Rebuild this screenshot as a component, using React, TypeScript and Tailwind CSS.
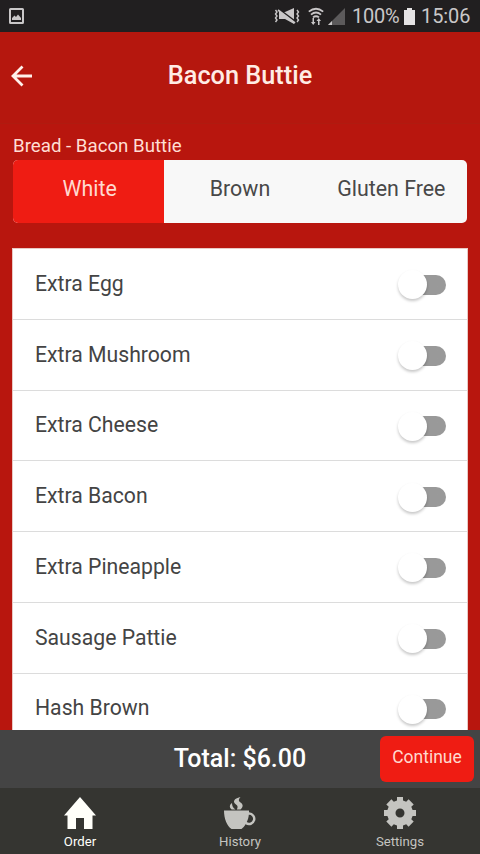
import React, { useState } from "react";

const breads = ["White", "Brown", "Gluten Free"];

const extras = [
  "Extra Egg",
  "Extra Mushroom",
  "Extra Cheese",
  "Extra Bacon",
  "Extra Pineapple",
  "Sausage Pattie",
  "Hash Brown",
];

function StatusBar() {
  return (
    <div className="flex h-8 shrink-0 items-center justify-between bg-[#211f20] pl-[9px] pr-[10px] text-[#c9c7c8]">
      <svg className="h-4 w-[15px]" viewBox="0 0 15 16" fill="none">
        <rect x="1" y="1" width="13" height="14" rx="0.5" stroke="currentColor" strokeWidth="2" />
        <path d="M3 12V10l2.500-2.500L7 9l2-2.500 3 3.500v2z" fill="currentColor" />
      </svg>
      <div className="flex items-center">
        {/* Muted / vibrate */}
        <svg className="mr-[8px] h-[18px] w-[26px]" viewBox="0 0 26 18" fill="none" stroke="currentColor" strokeWidth="1.4">
          <path d="M1.500 3L3 5 1.500 7 3 9l-1.500 2L3 13l-1.500 2M23 3l1.500 2L23 7l1.500 2-1.500 2 1.500 2-1.500 2" />
          <path d="M5 5h6l9-4v16l-9-5H5z" fill="currentColor" stroke="none" />
          <path d="M4 1.500L22 15" stroke="#211f20" strokeWidth="1.600" />
          <path d="M4 3L21 16" strokeWidth="1.600" />
        </svg>
        {/* Wifi with traffic arrows */}
        <svg className="mr-[4px] h-[18px] w-[16px]" viewBox="0 0 16 18" fill="none" stroke="currentColor" strokeWidth="1.8">
          <path d="M.8 4.600Q8-1.200 15.200 4.600M3 7.600Q8 3.400 13 7.600M5 10.400Q8 8 11 10.400" />
          <path d="M6 11v4H7.500L5.200 18 3 15h1.500v-4zM10 18v-4H8.500l2.300-3L13 14h-1.500v4z" fill="currentColor" stroke="none" />
        </svg>
        {/* Signal */}
        <svg className="mr-[7px] h-[17px] w-[17px]" viewBox="0 0 17 17">
          <path d="M0 17L17 0v17z" fill="#5c5a5b" />
          <path d="M0 17l4-4v4z" fill="currentColor" />
        </svg>
        <span className="w-[48px] whitespace-nowrap text-[20px] leading-8 tracking-[-0.2px]">100%</span>
        <svg className="ml-[4px] mr-[6px] h-[17px] w-[11px]" viewBox="0 0 11 17" fill="#e5e3e4">
          <path d="M3 0h5v2h3v15H0V2h3z" />
        </svg>
        <span className="w-[49px] whitespace-nowrap text-[20px] leading-8 tracking-[-0.1px]">15:06</span>
      </div>
    </div>
  );
}

function Toggle({ on, onClick }: { on: boolean; onClick: () => void }) {
  return (
    <button role="switch" aria-checked={on} onClick={onClick} className="mt-[2px] flex h-[29px] w-[48px] items-center">
      <span className="flex h-5 w-full items-center rounded-full bg-gradient-to-r from-transparent from-30% to-[#999] to-30%">
        <span className={`h-[29px] w-[29px] shrink-0 rounded-full bg-white shadow-[0_2px_3px_rgba(0,0,0,0.22)] ${on ? "ml-auto" : ""}`} />
      </span>
    </button>
  );
}

function HomeIcon() {
  return (
    <svg className="h-8 w-8" viewBox="0 0 32 32" fill="currentColor">
      <path d="M16 0L0 18.500h3.500V32h8.500V21h8v11h8.500V18.500H32z" />
    </svg>
  );
}

function CupIcon() {
  return (
    <svg className="h-8 w-8" viewBox="0 0 32 32" fill="currentColor">
      <path
        fillRule="evenodd"
        d="M0 13.500h25v1.800a6.500 6.500 0 1 1-3.500 12C20.500 29.500 19 31 17.500 32h-10C3 29 0 22 0 13.500zM24.800 17.800c-.2 2.800-.9 5-2 7.300a4 4 0 1 0 2-7.300z"
      />
      <path d="M16.500 0c-7 1.500-8 5-4.500 7.500 2 1.400 2 2.700.8 5h3.700c3-2.800 2.800-5.300-.3-7.200-2-1.200-1.700-3.300.3-5.300z" />
      <path d="M8 6C5.200 8 5.200 10.500 7.700 12.500h3.800C9 11 8 9 8 6z" />
    </svg>
  );
}

function GearIcon() {
  return (
    <svg className="h-8 w-8" viewBox="0 0 32 32" fill="currentColor">
      <path
        fillRule="evenodd"
        d="M13 0h6v3.400l3.200 1.300 2.400-2.400 5.100 5.100-2.400 2.400L28.600 13H32v6h-3.400l-1.300 3.200 2.400 2.400-5.100 5.100-2.400-2.400-3.200 1.300V32h-6v-3.400l-3.200-1.300-2.400 2.400-5.100-5.100 2.400-2.400L3.400 19H0v-6h3.400l1.300-3.200-2.400-2.400 5.100-5.100 2.400 2.400L13 3.400zM16 11.500a4.500 4.500 0 1 0 0 9 4.500 4.500 0 0 0 0-9z"
      />
    </svg>
  );
}

const tabs = [
  { label: "Order", icon: HomeIcon },
  { label: "History", icon: CupIcon },
  { label: "Settings", icon: GearIcon },
];

export default function App() {
  const [bread, setBread] = useState("White");
  const [selected, setSelected] = useState<string[]>([]);
  const [tab, setTab] = useState("Order");

  const toggleExtra = (name: string) => {
    setSelected(selected.includes(name) ? selected.filter((n) => n !== name) : [...selected, name]);
  };

  return (
    <div className="flex h-[854px] w-[480px] flex-col overflow-hidden bg-[#b8160e] font-['Roboto',sans-serif]">
      <StatusBar />

      {/* Header */}
      <header className="grid h-[92px] shrink-0 grid-cols-[60px_1fr_60px] items-center border-b border-[#b01b10] bg-[#b5170e] pb-1">
        <button aria-label="Back" className="pl-[11px] text-[#fff0ea]">
          <svg className="h-[22px] w-[22px]" viewBox="0 0 22 22" fill="none" stroke="currentColor" strokeWidth="2.8">
            <path d="M21 11H2M11.500 1.500L2 11l9.500 9.500" />
          </svg>
        </button>
        <h1 className="text-center text-[25.3px] font-medium leading-8 text-[#ffece5]">Bacon Buttie</h1>
      </header>

      {/* Options */}
      <main className="flex min-h-0 flex-1 flex-col overflow-hidden px-3">
        <p className="mt-[9px] h-[27px] shrink-0 pl-px text-[18.7px] leading-[26px] text-[#ffded4]">Bread - Bacon Buttie</p>
        <div className="mx-px grid h-[63px] shrink-0 grid-cols-3 overflow-hidden rounded-[5px] bg-[#f8f8f8]">
          {breads.map((b) => (
            <button
              key={b}
              onClick={() => setBread(b)}
              className={`whitespace-nowrap pb-[4px] text-[21.4px] ${bread === b ? "bg-[#ef1c13] pl-[2px] text-[#ffd9cf]" : "text-[#484848]"}`}
            >
              {b}
            </button>
          ))}
        </div>

        <div className="mt-[25px] shrink-0 border border-b-0 border-[#e9c9c5] bg-white">
          {extras.map((name) => (
            <div key={name} className="flex h-[70.75px] items-center justify-between border-b border-[#dcdcdc] pl-[22px] pr-[21px]">
              <span className="whitespace-nowrap text-[21.2px] leading-7 text-[#444]">{name}</span>
              <Toggle on={selected.includes(name)} onClick={() => toggleExtra(name)} />
            </div>
          ))}
        </div>
      </main>

      {/* Total */}
      <div className="grid h-[58px] shrink-0 grid-cols-[1fr_160px_1fr] items-center bg-[#444]">
        <span className="col-start-2 whitespace-nowrap text-center text-[25px] font-medium text-white">Total: $6.00</span>
        <button className="mr-[6px] h-[46px] w-[94px] justify-self-end rounded-[6px] bg-[#ef1c13] pb-[3px] text-[17.5px] text-[#ffd9cf]">
          Continue
        </button>
      </div>

      {/* Tab bar */}
      <nav className="grid h-[66px] shrink-0 grid-cols-3 bg-[#353531]">
        {tabs.map(({ label, icon: Icon }) => (
          <button
            key={label}
            onClick={() => setTab(label)}
            className={`flex flex-col items-center pt-[9px] ${tab === label ? "text-[#fffffa]" : "text-[#c4c4c0]"}`}
          >
            <Icon />
            <span className="mt-[4px] text-[13.2px] leading-[18px]">{label}</span>
          </button>
        ))}
      </nav>
    </div>
  );
}
